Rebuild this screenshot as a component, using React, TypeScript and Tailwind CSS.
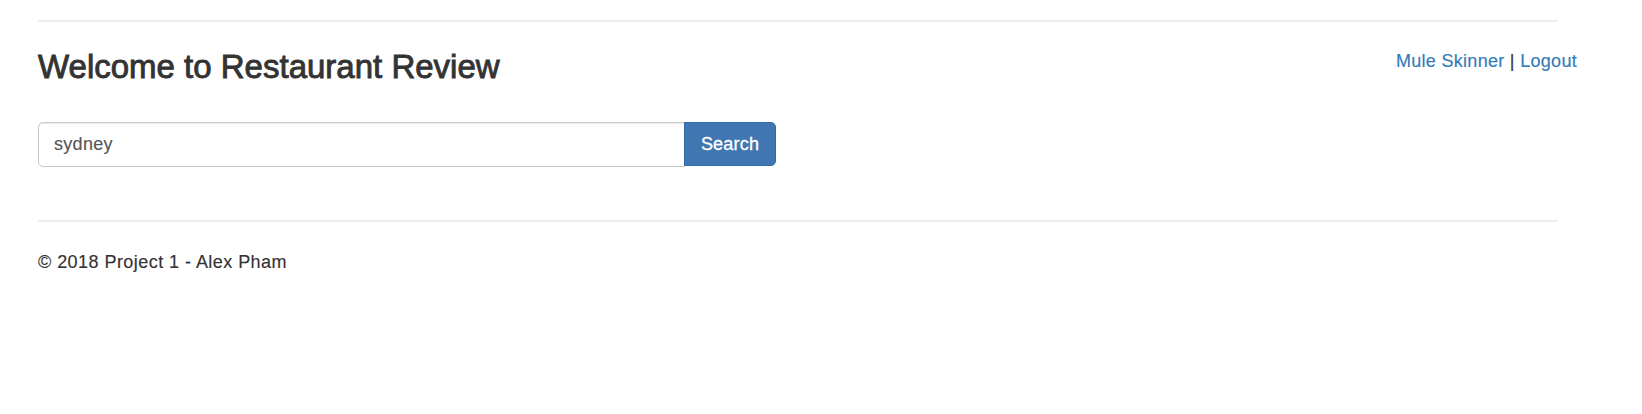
import React from "react";

export default function App() {
  return (
    <div className="min-h-[414px] w-full bg-white font-['Liberation_Sans',Arial,sans-serif] text-[#333333]">
      <div className="pl-[38px] pt-[20px]">
        <div className="h-[2px] w-[1520px] bg-[#eeeeee]" />
        <div className="mt-[26px] flex w-[1539px] items-start justify-between">
          <h3 className="mt-[1px] text-[33px] leading-[36px] font-normal text-[#333333] [-webkit-text-stroke:0.9px_#333333]">
            Welcome to Restaurant Review
          </h3>
          <div className="text-[18px] leading-[26px] tracking-[0.3px] [-webkit-text-stroke:0.15px_currentColor]">
            <a href="#" className="text-[#337ab7]">Mule Skinner</a>
            <span className="text-[#333333]"> | </span>
            <a href="#" className="text-[#337ab7]">Logout</a>
          </div>
        </div>
        <form className="mt-[37px] flex w-[738px]" onSubmit={(e) => e.preventDefault()}>
          <input
            type="text"
            defaultValue="sydney"
            className="h-[45px] w-[647px] rounded-l-[5px] border border-[#c8c8c8] bg-white px-[15px] text-[18px] tracking-[0.3px] text-[#555555] shadow-[inset_0_1px_1px_rgba(0,0,0,0.075)] outline-none [-webkit-text-stroke:0.15px_#555555]"
          />
          <button
            type="submit"
            className="-ml-px h-[44px] w-[92px] rounded-r-[5px] border border-[#2e6da4] bg-[#4077b2] text-[18px] tracking-[0.2px] text-white [-webkit-text-stroke:0.3px_#ffffff]"
          >
            Search
          </button>
        </form>
        <div className="mt-[53px] h-[2px] w-[1520px] bg-[#eeeeee]" />
        <footer className="mt-[27px] text-[18px] leading-[26px] tracking-[0.45px] text-[#333333] [-webkit-text-stroke:0.15px_#333333]">
          © 2018 Project 1 - Alex Pham
        </footer>
      </div>
    </div>
  );
}
